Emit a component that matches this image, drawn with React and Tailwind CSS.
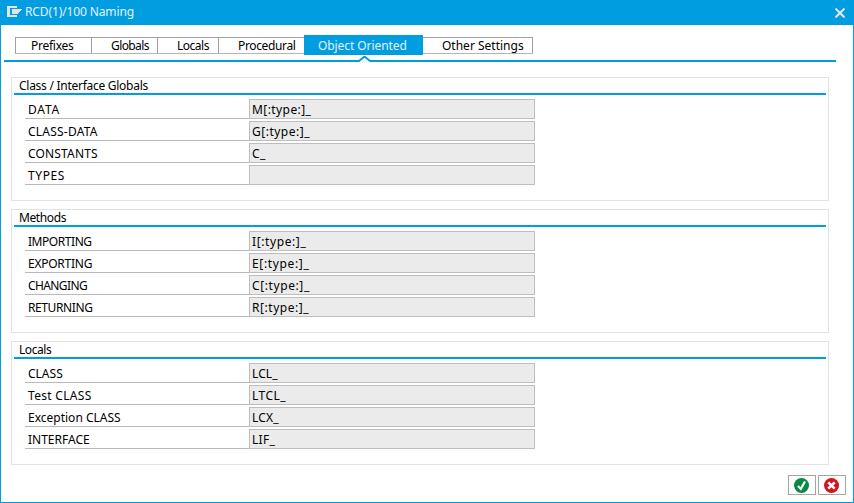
const groups = [
  {
    title: "Class / Interface Globals",
    tracking: "tracking-[-0.27px]",
    rows: [
      ["DATA", "tracking-[0.8px]", "M[:type:]_", "tracking-[0.42px]"],
      ["CLASS-DATA", "tracking-[0.22px]", "G[:type:]_", "tracking-[0.5px]"],
      ["CONSTANTS", "tracking-[0.17px]", "C_", "tracking-[0.5px]"],
      ["TYPES", "tracking-[0.6px]", "", ""],
    ],
  },
  {
    title: "Methods",
    tracking: "tracking-[-0.4px]",
    rows: [
      ["IMPORTING", "tracking-[-0.45px]", "I[:type:]_", "tracking-[0.6px]"],
      ["EXPORTING", "tracking-[-0.25px]", "E[:type:]_", "tracking-[0.65px]"],
      ["CHANGING", "tracking-[-0.6px]", "C[:type:]_", "tracking-[0.6px]"],
      ["RETURNING", "tracking-[-0.4px]", "R[:type:]_", "tracking-[0.55px]"],
    ],
  },
  {
    title: "Locals",
    tracking: "tracking-[-0.45px]",
    rows: [
      ["CLASS", "", "LCL_", "tracking-[0.1px]"],
      ["Test CLASS", "tracking-[0.3px]", "LTCL_", "tracking-[0.5px]"],
      ["Exception CLASS", "", "LCX_", "tracking-[0.2px]"],
      ["INTERFACE", "", "LIF_", "tracking-[0.3px]"],
    ],
  },
];

function Tab({ className, children }) {
  return (
    <button className={`mt-[2px] h-[17px] shrink-0 border-t border-b border-t-[#a0a0a0] border-b-[#b4b4b4] text-left leading-[15px] ${className}`}>
      {children}
    </button>
  );
}

function Group({ title, tracking, rows }) {
  return (
    <section className="h-[124px] w-[818px] border border-[#e3e3e3] px-[2px]">
      <h2 className={`h-[17px] border-b-2 border-[#009de0] pl-[5px] leading-[15px] ${tracking}`}>{title}</h2>
      <div className="mt-1 ml-[11px] flex flex-col gap-[2px]">
        {rows.map(([label, labelTracking, value, valueTracking]) => (
          <div key={label} className="flex h-5">
            <div className={`w-[224px] border-b border-[#b9b9b9] pl-[3px] leading-[22px] ${labelTracking}`}>{label}</div>
            <div className={`w-[286px] border border-[#bdbdbd] bg-[#ebebeb] pl-[2px] leading-[20px] ${valueTracking}`}>{value}</div>
          </div>
        ))}
      </div>
    </section>
  );
}

export default function App() {
  return (
    <div className="flex h-[503px] w-[854px] flex-col border border-[#009de0] bg-white font-['Noto_Sans',sans-serif] text-[12px] whitespace-nowrap text-black">
      <header className="flex h-6 shrink-0 items-start bg-[#009de0] pl-[6px] text-[#e4f2fa]">
        <svg className="mt-[5px]" width="15" height="11" shapeRendering="crispEdges">
          <path d="M0 0H10V2H3V9H10V11H0Z" fill="#e3e3e3" />
          <path d="M5 3H15L10 8H5Z" fill="#e3e3e3" />
        </svg>
        <h1 className="ml-[3px] leading-[21px] tracking-[-0.12px]">RCD(1)/100 Naming</h1>
        <svg className="mt-[7px] mr-[8px] ml-auto" width="10" height="10">
          <path d="M0.500 0.500L9.500 9.500M9.500 0.500L0.500 9.500" stroke="#e7e7e7" strokeWidth="2" />
        </svg>
      </header>

      <nav className="mt-[10px] flex h-[21px] shrink-0 pl-[14px]">
        <Tab className="w-[76px] border-l border-l-[#a0a0a0] pl-[15px] tracking-[-0.25px]">Prefixes</Tab>
        <Tab className="w-[66px] border-l border-l-[#a0a0a0] pl-[19px] tracking-[-0.6px]">Globals</Tab>
        <Tab className="w-[61px] border-l border-l-[#a0a0a0] pl-[19px] tracking-[-0.5px]">Locals</Tab>
        <Tab className="w-[86px] border-l border-l-[#a0a0a0] pl-[19px] tracking-[-0.35px]">Procedural</Tab>
        <button className="h-5 w-[119px] bg-[#009de0] pt-px pl-[14px] text-left leading-[19px] tracking-[-0.08px] text-[#e4f2fa]">Object Oriented</button>
        <Tab className="w-[110px] border-r border-r-[#a0a0a0] pl-[19px]">Other Settings</Tab>
      </nav>
      <svg className="ml-[3px] shrink-0" width="832" height="6">
        <path d="M0 5H355L360.500 0.500L366 5H832" fill="none" stroke="#009de0" strokeWidth="2" />
      </svg>

      <main className="mt-[15px] ml-[10px] flex flex-col gap-2">
        {groups.map((group) => <Group key={group.title} {...group} />)}
      </main>

      <footer className="mt-[10px] mr-[7px] flex justify-end gap-[2px]">
        <button aria-label="Continue" className="flex h-5 w-7 items-center justify-center border border-[#a5a5a5]">
          <svg width="16" height="16" viewBox="0 0 16 16">
            <circle cx="7.500" cy="8.500" r="7.500" fill="#078943" />
            <path d="M4 9L6.800 12L11 4.500" fill="none" stroke="white" strokeWidth="2.200" />
          </svg>
        </button>
        <button aria-label="Cancel" className="flex h-5 w-7 items-center justify-center border border-[#a5a5a5]">
          <svg width="16" height="16" viewBox="0 0 16 16">
            <circle cx="7.500" cy="8.500" r="7.500" fill="#cf161f" />
            <path d="M4.300 5.300L10.700 11.700M10.700 5.300L4.300 11.700" stroke="white" strokeWidth="2.600" />
          </svg>
        </button>
      </footer>
    </div>
  );
}
